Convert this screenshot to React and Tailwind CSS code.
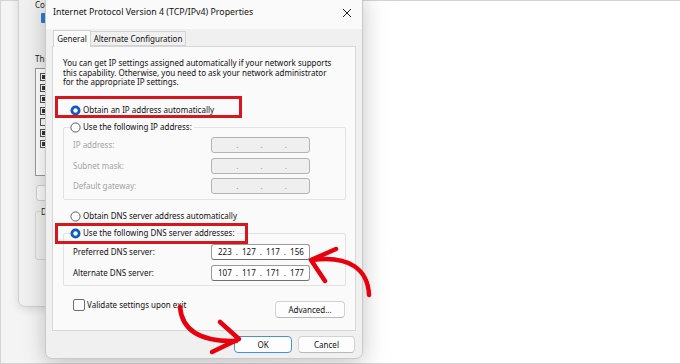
const font = { fontFamily: '"Segoe UI","Noto Sans",sans-serif' };

function Radio({ checked }) {
  return (
    <svg width="11" height="11" viewBox="0 0 11 11" className="shrink-0">
      {checked ? (
        <>
          <circle cx="5.5" cy="5.5" r="5" fill="#0a5cc0" />
          <circle cx="5.5" cy="5.5" r="2.2" fill="#ffffff" />
        </>
      ) : (
        <circle cx="5.5" cy="5.5" r="4.6" fill="#ffffff" stroke="#5c5c5c" strokeWidth="1" />
      )}
    </svg>
  );
}

function RadioRow({ checked, children, className = '' }) {
  return (
    <div className={`flex items-center gap-[2px] h-[12px] leading-[12px] text-[#111] ${className}`}>
      <Radio checked={checked} />
      <span className="whitespace-nowrap">{children}</span>
    </div>
  );
}

function IpBox({ value }) {
  if (!value) {
    return (
      <div className="w-[99px] h-[16px] rounded-[3px] border border-[#b3b3b3] bg-[#efefef] grid grid-cols-4 items-center">
        <span />
        <span className="text-[#8c8c8c] leading-none">.</span>
        <span className="text-[#8c8c8c] leading-none">.</span>
        <span className="text-[#8c8c8c] leading-none">.</span>
      </div>
    );
  }
  return (
    <div className="w-[99px] h-[16px] rounded-[3px] border border-[#9a9a9a] border-b-[#6f6f6f] bg-white flex items-center pl-[6px] text-[#111] whitespace-pre leading-none [word-spacing:2px]">
      {value}
    </div>
  );
}

function Field({ label, value, disabled }) {
  return (
    <div className="flex items-center h-[16px]">
      <span className={`w-[138px] whitespace-nowrap ${disabled ? 'text-[#a3a3a3]' : 'text-[#111]'}`}>{label}</span>
      <IpBox value={value} />
    </div>
  );
}

function Button({ children, primary, className = '' }) {
  return (
    <div
      className={`h-[17px] rounded-[4px] bg-[#fdfdfd] flex items-center justify-center text-[#111] leading-none border ${
        primary ? 'border-[#4a90d9]' : 'border-[#d2d2d2] border-b-[#b8b8b8]'
      } ${className}`}
    >
      {children}
    </div>
  );
}

function BackgroundWindow() {
  const rows = [true, true, true, true, false, true, true];
  return (
    <div className="absolute left-[18px] -top-[10px] w-[60px] h-[317px] bg-[#f0f0f0] border border-[#d0d0d0] rounded-b-[7px] shadow-[0_2px_10px_rgba(0,0,0,0.12)] overflow-hidden text-[8px]">
      <div className="pl-[16px] pt-[9px] text-[#222] leading-[9px]">Co</div>
      <div className="ml-[22px] mt-[4px] w-[6px] h-[10px] bg-[#2d7fd0] rounded-[1px]" />
      <div className="pl-[16px] mt-[31px] text-[#222] leading-[10px]">Thi</div>
      <div className="ml-[16px] mt-[4px] w-[60px] h-[108px] bg-white border border-[#9a9a9a] pt-[4px] pl-[4px] flex flex-col gap-[3.2px]">
        {rows.map((c, i) => (
          <div key={i} className="w-[8px] h-[8px] border border-[#555] bg-white flex items-center justify-center">
            {c && <div className="w-[4px] h-[4px] bg-[#333]" />}
          </div>
        ))}
      </div>
      <div className="ml-[17px] mt-[9px] w-[40px] h-[16px] bg-[#fbfbfb] border border-[#cfcfcf] rounded-[3px]" />
      <div className="ml-[16px] mt-[10px] w-[40px] h-[49px] border border-[#d6d6d6] rounded-[3px] pl-[5px] leading-[9px] text-[#222]">
        <span className="relative -top-[5px] bg-[#f0f0f0]">D</span>
      </div>
    </div>
  );
}

function Dialog() {
  return (
    <div className="absolute left-[45px] -top-[6px] w-[318px] h-[365px] bg-[#f0f0f0] border border-[#c9c9c9] rounded-b-[7px] shadow-[0_4px_22px_rgba(0,0,0,0.22)] text-[8px] flex flex-col" style={font}>
      <div className="h-[34px] shrink-0 bg-[#fafafa] flex items-center justify-between pl-[7px] pr-[10px] pt-[2px]">
        <span className="text-[8.8px] text-[#111] whitespace-nowrap">Internet Protocol Version 4 (TCP/IPv4) Properties</span>
        <svg width="10" height="10" viewBox="0 0 10 10">
          <path d="M1 1 L9 9 M9 1 L1 9" stroke="#222" strokeWidth="1" />
        </svg>
      </div>

      <div className="px-[6px] flex flex-col">
        <div className="flex items-end h-[17px] pl-[1px]">
          <div className="h-[17px] w-[38px] bg-[#fbfbfb] border border-b-0 border-[#d3d3d3] flex items-center justify-center text-[#111] relative z-10 -mb-[1px]">General</div>
          <div className="h-[15px] w-[95px] border border-l-0 border-[#d3d3d3] flex items-center justify-center text-[#111] bg-[#f0f0f0]">Alternate Configuration</div>
        </div>

        <div className="relative h-[285px] bg-[#fafafa] border border-[#d7d7d7] flex flex-col">
          <p className="ml-[10px] mt-[11px] leading-[9.7px] text-[#111] whitespace-nowrap">
            You can get IP settings assigned automatically if your network supports
            <br />
            this capability. Otherwise, you need to ask your network administrator
            <br />
            for the appropriate IP settings.
          </p>

          <RadioRow checked className="ml-[17px] mt-[17px]">Obtain an IP address automatically</RadioRow>

          <fieldset className="ml-[10px] mr-[9px] mt-[5px] border border-[#e2e2e2] rounded-[2px] pb-[5px]">
            <legend className="ml-[6px] pr-[2px]">
              <RadioRow>Use the following IP address:</RadioRow>
            </legend>
            <div className="pl-[9px] pt-[4px] flex flex-col gap-[4.5px]">
              <Field label="IP address:" disabled />
              <Field label="Subnet mask:" disabled />
              <Field label="Default gateway:" disabled />
            </div>
          </fieldset>

          <RadioRow className="ml-[17px] mt-[10px]">Obtain DNS server address automatically</RadioRow>

          <fieldset className="ml-[10px] mr-[9px] mt-[5px] border border-[#e2e2e2] rounded-[2px] pb-[4px]">
            <legend className="ml-[6px] pr-[2px]">
              <RadioRow checked>Use the following DNS server addresses:</RadioRow>
            </legend>
            <div className="pl-[9px] pt-[5px] flex flex-col gap-[5px]">
              <Field label="Preferred DNS server:" value="223 . 127 . 117 . 156" />
              <Field label="Alternate DNS server:" value="107 . 117 . 171 . 177" />
            </div>
          </fieldset>

          <div className="flex items-start justify-between pl-[20px] pr-[10px] mt-[13px]">
            <div className="flex items-center gap-[2px] h-[12px]">
              <div className="w-[12px] h-[12px] rounded-[2px] border border-[#6d6d6d] bg-white" />
              <span className="text-[#111] whitespace-nowrap">Validate settings upon exit</span>
            </div>
            <Button className="w-[70px] mt-[2px]">Advanced...</Button>
          </div>
        </div>
      </div>

      <div className="flex justify-end gap-[6px] pr-[7px] mt-[5px]">
        <Button primary className="w-[58px]">OK</Button>
        <Button className="w-[57px]">Cancel</Button>
      </div>
    </div>
  );
}

function Annotations() {
  return (
    <>
      <div className="absolute left-[55px] top-[96px] w-[187px] h-[22px] border-[3px] border-[#d8161e]" />
      <div className="absolute left-[55px] top-[223px] w-[193px] h-[21px] border-[3px] border-[#d8161e]" />
      <svg className="absolute inset-0 pointer-events-none" width="680" height="364" viewBox="0 0 680 364">
        <g fill="none" stroke="#e8000c" strokeWidth="4.5" strokeLinecap="round" strokeLinejoin="round">
          <path d="M369 295 C368 270 350 255 312 260" />
          <path d="M336 249 L311 260 L325 281" />
          <path d="M180 307 C182 330 200 342 236 341" />
          <path d="M220 322 L239 339 L212 352" />
        </g>
      </svg>
    </>
  );
}

export default function App() {
  return (
    <div className="relative w-[680px] h-[364px] bg-white overflow-hidden" style={font}>
      <div className="absolute left-0 top-0 w-[400px] h-[364px] bg-gradient-to-r from-[#f4f4f4] via-[#f4f4f4] to-white" />
      <div className="absolute inset-0 border-t border-l border-b border-[#d4d4d4]" />
      <BackgroundWindow />
      <Dialog />
      <Annotations />
    </div>
  );
}
